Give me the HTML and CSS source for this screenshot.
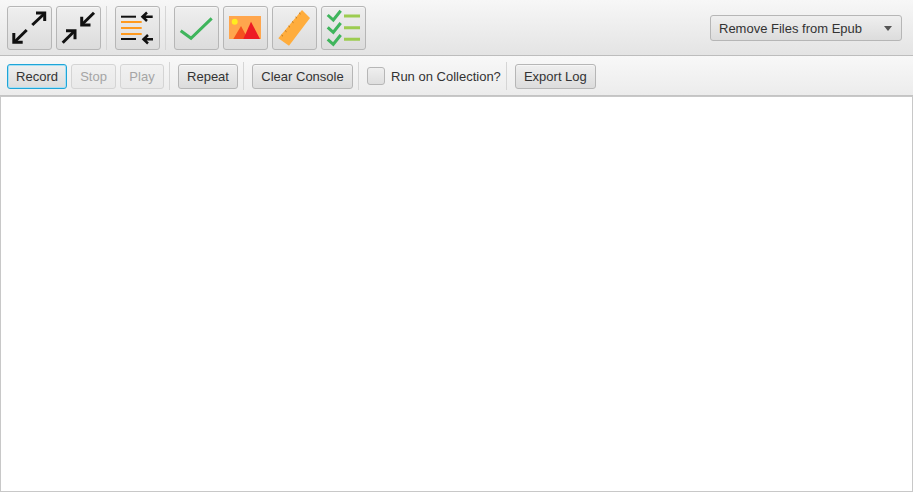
FILE: index.html
```html
<!DOCTYPE html>
<html lang="en">
<head>
<meta charset="utf-8">
<title>Console</title>
<link rel="stylesheet" href="styles.css">
</head>
<body>
<div class="app">
  <div class="toolbar top">
    <button class="btn icon"><svg class="glyph" viewBox="1 1 43 42"><path class="arw" d="M25.300 19 L37 8"/><path class="arw" d="M29 7 H37.700 V15"/><path class="arw" d="M19.700 24 L8 35.500"/><path class="arw" d="M6.800 27 V36.200 H15.700"/></svg></button>
    <button class="btn icon"><svg class="glyph" viewBox="1 1 43 42"><path class="arw" d="M38 6.700 L26.500 18"/><path class="arw" d="M25.700 10.700 V19 H34.500"/><path class="arw" d="M6.700 36.700 L18 25.500"/><path class="arw" d="M10 24.700 H19 V33.300"/></svg></button>
    <span class="sep first"></span>
    <button class="btn icon"><svg class="glyph" viewBox="1 1 43 42"><path class="ln k" d="M6 10.700 H21"/><path class="ln o" d="M6 16 H26.700"/><path class="ln o" d="M6 22 H26.700"/><path class="ln o" d="M6 28 H26.700"/><path class="ln k" d="M6 33 H21"/><path class="ar" d="M37.700 10.700 H28 M32 6.500 L27.500 10.700 L32 15"/><path class="ar" d="M38 33.300 H29 M33 29 L28.500 33.300 L33 37.500"/></svg></button>
    <span class="sep second"></span>
    <button class="btn icon"><svg class="glyph" viewBox="1 1 43 42"><path class="chk" d="M6.700 24.700 L17 32.300 L37.700 12.300"/></svg></button>
    <button class="btn icon"><svg class="glyph" viewBox="1 1 43 42"><rect x="6" y="10" width="32" height="23" fill="#ffa64d"/><circle cx="11.700" cy="15.700" r="3" fill="#ffec1f"/><path d="M10.300 33 L18 20 L25 33 Z" fill="#f4511e"/><path d="M20.300 33 L28 15.700 L37 33 Z" fill="#ed1c24"/></svg></button>
    <button class="btn icon"><svg class="glyph" viewBox="1 1 43 42"><path d="M30 4 L38 12 L17 39.700 L6.300 32.300 Z" fill="#ffad3d"/><path class="tick" d="M9.500 29 L11 30.200 M13 24.500 L14.500 25.700 M16.500 20 L18 21.200 M20 15.500 L21.500 16.700 M23.500 11 L25 12.200 M27 6.800 L28.500 8"/></svg></button>
    <button class="btn icon"><svg class="glyph" viewBox="1 1 43 42"><path class="chk2" d="M6.700 9 L12.300 14 L19.700 4.700"/><path class="chk2" d="M6.700 21.300 L12.300 26.300 L19.700 17"/><path class="chk2" d="M6.700 33.300 L12.300 38.300 L19.700 29"/><path class="bar" d="M23 10 H39 M23 21.700 H39 M23 33.300 H39"/></svg></button>
    <span class="grow"></span>
    <div class="combo"><span class="combo-label">Remove Files from Epub</span><span class="caret"></span></div>
  </div>
  <div class="toolbar sub">
    <button class="btn text focus w-record">Record</button>
    <button class="btn text off w-stop">Stop</button>
    <button class="btn text off w-play">Play</button>
    <span class="sep tall"></span>
    <button class="btn text w-repeat">Repeat</button>
    <span class="sep tall"></span>
    <button class="btn text w-clear">Clear Console</button>
    <span class="sep tall"></span>
    <label class="check"><span class="box"></span><span>Run on Collection?</span></label>
    <span class="sep tall"></span>
    <button class="btn text w-export">Export Log</button>
  </div>
  <div class="console"></div>
</div>
</body>
</html>
```
FILE: styles.css
```css
* { box-sizing: border-box; }
html, body { margin: 0; height: 100%; background: #f4f4f4; }
body { font: 13px "Liberation Sans", Arial, sans-serif; color: #333; overflow: hidden; }
.app { display: flex; flex-direction: column; width: 913px; height: 492px; }
.toolbar { display: flex; align-items: center; flex: none; padding-left: 7px; border-bottom: 1px solid #bdbdbd; }
.top { height: 56px; padding-top: 1px; padding-right: 11px; background: linear-gradient(#f7f7f7, #e4e4e4); gap: 4px; }
.sub { height: 40px; padding-top: 1px; background: linear-gradient(#f8f8f8, #ececec); gap: 4px; border-bottom-color: #c4c4c4; }
.btn { display: flex; align-items: center; justify-content: center; padding: 0; font: inherit; color: #333; border: 1px solid #b6b6b6; border-radius: 3px; background: linear-gradient(#efefef, #dcdcdc); box-shadow: inset 0 1px 0 #f6f6f6; }
.icon { width: 45px; height: 44px; }
.glyph { display: block; width: 43px; height: 42px; }
.text { height: 25px; }
.w-record { width: 60px; }
.w-stop { width: 45px; }
.w-play { width: 44px; }
.w-repeat { width: 60px; }
.w-clear { width: 101px; }
.w-export { width: 81px; }
.focus { border-color: #1ea5d8; box-shadow: 0 0 0 1px #a6dff4 inset; }
.off { color: #a5a5a5; border-color: #d4d4d4; background: linear-gradient(#f1f1f1, #e9e9e9); box-shadow: none; }
.sep { flex: none; width: 1px; background: #d5d5d5; }
.first { height: 44px; margin: 0 4px 0 1px; }
.second { height: 44px; margin: 0 4px 0 1px; }
.tall { height: 28px; }
.sub .sep { margin-left: 1px; margin-right: 4px; }
.grow { flex: 1; }
.combo { display: flex; align-items: center; justify-content: space-between; width: 192px; height: 26px; padding: 0 9px 0 8px; border: 1px solid #b6b6b6; border-radius: 3px; background: linear-gradient(#efefef, #dcdcdc); }
.caret { width: 0; height: 0; border-left: 4.500px solid transparent; border-right: 4.500px solid transparent; border-top: 5px solid #555; }
.check { display: flex; align-items: center; gap: 6px; }
.box { width: 18px; height: 18px; border: 1px solid #b6b6b6; border-radius: 3px; background: linear-gradient(#efefef, #dedede); }
.console { flex: 1; background: #fff; border: 1px solid #c8c8c8; }
.arw, .ln, .ar, .chk, .chk2, .bar, .tick { fill: none; }
.arw { stroke: #111; stroke-width: 3; }
.ln { stroke-width: 2; }
.k { stroke: #111; }
.o { stroke: #ff9a1f; }
.ar { stroke: #111; stroke-width: 2.500; }
.chk { stroke: #3fb55c; stroke-width: 3; }
.chk2 { stroke: #3fb55c; stroke-width: 3; }
.bar { stroke: #9ccc50; stroke-width: 3; }
.tick { stroke: #b8731c; stroke-width: 1; }
```
